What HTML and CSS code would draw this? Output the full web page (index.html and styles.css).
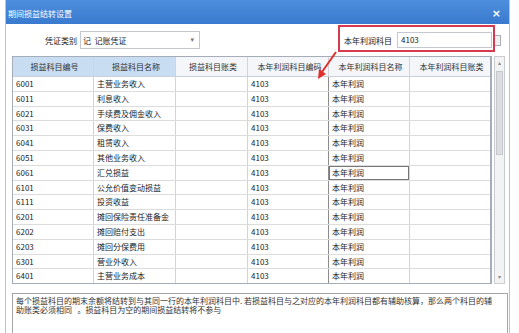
FILE: index.html
```html
<!DOCTYPE html>
<html lang="zh-CN">
<head>
  <meta charset="UTF-8">
  <title>期间损益结转设置</title>
  <link rel="stylesheet" href="styles.css">
</head>
<body>

  <div class="window">
    <div class="titlebar">
      <span class="title">期间损益结转设置</span>
      <span class="close">×</span>
    </div>

    <div class="toolbar">
      <div class="field left">
        <span class="label">凭证类别</span>
        <div class="combo">
          <span>记&nbsp;&nbsp;记账凭证</span>
          <span class="arrow">▾</span>
        </div>
      </div>
      <div class="field right">
        <span class="label">本年利润科目</span>
        <div class="input">4103</div>
        <span class="pick"></span>
      </div>
    </div>

    <div class="grid-wrap">
      <div class="grid">
        <div class="row head">
          <div class="cell blue">损益科目编号</div>
          <div class="cell blue">损益科目名称</div>
          <div class="cell">损益科目账类</div>
          <div class="cell">本年利润科目编码</div>
          <div class="cell">本年利润科目名称</div>
          <div class="cell">本年利润科目账类</div>
        </div>
        <div class="row"><div class="cell">6001</div><div class="cell">主营业务收入</div><div class="cell"></div><div class="cell">4103</div><div class="cell">本年利润</div><div class="cell"></div></div>
        <div class="row"><div class="cell">6011</div><div class="cell">利息收入</div><div class="cell"></div><div class="cell">4103</div><div class="cell">本年利润</div><div class="cell"></div></div>
        <div class="row"><div class="cell">6021</div><div class="cell">手续费及佣金收入</div><div class="cell"></div><div class="cell">4103</div><div class="cell">本年利润</div><div class="cell"></div></div>
        <div class="row"><div class="cell">6031</div><div class="cell">保费收入</div><div class="cell"></div><div class="cell">4103</div><div class="cell">本年利润</div><div class="cell"></div></div>
        <div class="row"><div class="cell">6041</div><div class="cell">租赁收入</div><div class="cell"></div><div class="cell">4103</div><div class="cell">本年利润</div><div class="cell"></div></div>
        <div class="row"><div class="cell">6051</div><div class="cell">其他业务收入</div><div class="cell"></div><div class="cell">4103</div><div class="cell">本年利润</div><div class="cell"></div></div>
        <div class="row"><div class="cell">6061</div><div class="cell">汇兑损益</div><div class="cell"></div><div class="cell">4103</div><div class="cell cur">本年利润</div><div class="cell"></div></div>
        <div class="row"><div class="cell">6101</div><div class="cell">公允价值变动损益</div><div class="cell"></div><div class="cell">4103</div><div class="cell">本年利润</div><div class="cell"></div></div>
        <div class="row"><div class="cell">6111</div><div class="cell">投资收益</div><div class="cell"></div><div class="cell">4103</div><div class="cell">本年利润</div><div class="cell"></div></div>
        <div class="row"><div class="cell">6201</div><div class="cell">摊回保险责任准备金</div><div class="cell"></div><div class="cell">4103</div><div class="cell">本年利润</div><div class="cell"></div></div>
        <div class="row"><div class="cell">6202</div><div class="cell">摊回赔付支出</div><div class="cell"></div><div class="cell">4103</div><div class="cell">本年利润</div><div class="cell"></div></div>
        <div class="row"><div class="cell">6203</div><div class="cell">摊回分保费用</div><div class="cell"></div><div class="cell">4103</div><div class="cell">本年利润</div><div class="cell"></div></div>
        <div class="row"><div class="cell">6301</div><div class="cell">营业外收入</div><div class="cell"></div><div class="cell">4103</div><div class="cell">本年利润</div><div class="cell"></div></div>
        <div class="row"><div class="cell">6401</div><div class="cell">主营业务成本</div><div class="cell"></div><div class="cell">4103</div><div class="cell">本年利润</div><div class="cell"></div></div>
      </div>
      <div class="scrollbar">
        <span class="sb-btn">▴</span>
        <div class="sb-track"><div class="sb-thumb"></div></div>
        <span class="sb-btn">▾</span>
      </div>
    </div>

    <div class="desc">
      <div class="line">每个损益科目的期末余额将结转到与其同一行的本年利润科目中. 若损益科目与之对应的本年利润科目都有辅助核算，那么两个科目的辅</div>
      <div class="line">助账类必须相同&nbsp;&nbsp;&nbsp;。损益科目为空的期间损益结转将不参与</div>
    </div>
  </div>

  <!-- 标注：红框和箭头 -->
  <svg class="mark" width="519" height="333" viewBox="0 0 519 333">
    <rect x="339" y="26" width="155" height="25" fill="none" stroke="#d63a4e" stroke-width="2"/>
    <line x1="336" y1="52" x2="322" y2="72" stroke="#e0302a" stroke-width="2"/>
    <polygon points="318,79 319,69 326,74" fill="#e0302a"/>
  </svg>

</body>
</html>
```

FILE: styles.css
```css
body {
  margin: 0;
  background: #fff;
  font-family: "Noto Sans CJK SC", "Noto Sans", sans-serif;
  font-size: 8px;
  color: #222;
  overflow: hidden;
}

.window {
  margin-left: 5px;
  width: 505px;
  height: 333px;
  box-sizing: border-box;
  border-left: 1px solid #b4c4d8;
  border-right: 1px solid #b4c4d8;
  background: #fff;
  overflow: hidden;
}

.titlebar {
  height: 24px;
  padding: 2px 8px 0 2px;
  box-sizing: border-box;
  display: flex;
  align-items: center;
  justify-content: space-between;
  background: linear-gradient(#4d8fdc, #3a7acf);
  color: #fff;
}

.title {
  font-size: 8px;
}

.close {
  font-family: "DejaVu Sans", sans-serif;
  font-size: 11px;
  font-weight: bold;
}

/* 工具栏 */
.toolbar {
  height: 32px;
  display: flex;
  align-items: center;
  justify-content: space-between;
  padding: 0 8px 0 39px;
}

.field {
  display: flex;
  align-items: center;
}

.left .label {
  margin-right: 3px;
}

.right .label {
  margin-right: 5px;
}

.combo {
  width: 120px;
  height: 18px;
  box-sizing: border-box;
  border: 1px solid #c4c9d0;
  display: flex;
  align-items: center;
  justify-content: space-between;
  padding: 0 5px 0 2px;
  background: #fff;
}

.arrow {
  color: #777;
  font-family: "DejaVu Sans", sans-serif;
  font-size: 7px;
}

.input {
  width: 95px;
  height: 16px;
  box-sizing: border-box;
  border: 1px solid #c4c9d0;
  padding: 0 3px;
  line-height: 14px;
}

.pick {
  width: 8px;
  height: 11px;
  margin-left: 1px;
  box-sizing: border-box;
  border: 1px solid #a8aeb6;
  background: #f1f1f1;
}

/* 表格 */
.grid-wrap {
  margin-left: 6px;
  height: 228px;
  display: flex;
  gap: 2px;
}

.grid {
  width: 480px;
  height: 228px;
  box-sizing: border-box;
  border: 1px solid #a5adb8;
  border-right-width: 2px;
  overflow: hidden;
}

.row {
  display: grid;
  grid-template-columns: 81px 82px 72px 81px 81px 81px;
  height: 14.8px;
  box-sizing: border-box;
  border-bottom: 1px solid #dcdcdc;
  line-height: 13.8px;
}

.row.head {
  height: 20px;
  line-height: 19px;
  border-bottom: 1px solid #c8d0da;
  background: #f4f6f9;
  color: #333;
}

.head .cell {
  text-align: center;
}

.cell {
  padding-left: 3px;
  border-right: 1px solid #d4d4d4;
  white-space: nowrap;
  overflow: hidden;
}

.row .cell:nth-child(4) {
  border-right-color: #8c8c8c;
}

.head .cell:nth-child(4) {
  border-right-color: #d4d4d4;
}

.cell.blue {
  background: #c8dcf2;
}

.cell.cur {
  box-shadow: inset 0 0 0 1px #777;
}

.scrollbar {
  width: 11px;
  height: 228px;
  box-sizing: border-box;
  border: 1px solid #c9cdd2;
  background: #f3f3f3;
  display: flex;
  flex-direction: column;
  align-items: center;
}

.sb-btn {
  height: 12px;
  font-family: "DejaVu Sans", sans-serif;
  font-size: 6px;
  line-height: 12px;
  color: #888;
}

.sb-track {
  flex: 1;
  width: 100%;
}

.sb-thumb {
  margin: 2px 1px 0;
  height: 82px;
  background: #dcdde0;
  border: 1px solid #c6c8cc;
}

/* 说明 */
.desc {
  margin: 9px 1px 0 6px;
  height: 60px;
  box-sizing: border-box;
  border: 1px solid #a5a5a5;
  padding: 2px 3px;
  color: #333;
  white-space: nowrap;
}

.line {
  height: 9px;
  line-height: 9px;
  overflow: visible;
}

.mark {
  position: absolute;
  left: 0;
  top: 0;
  pointer-events: none;
}
```
